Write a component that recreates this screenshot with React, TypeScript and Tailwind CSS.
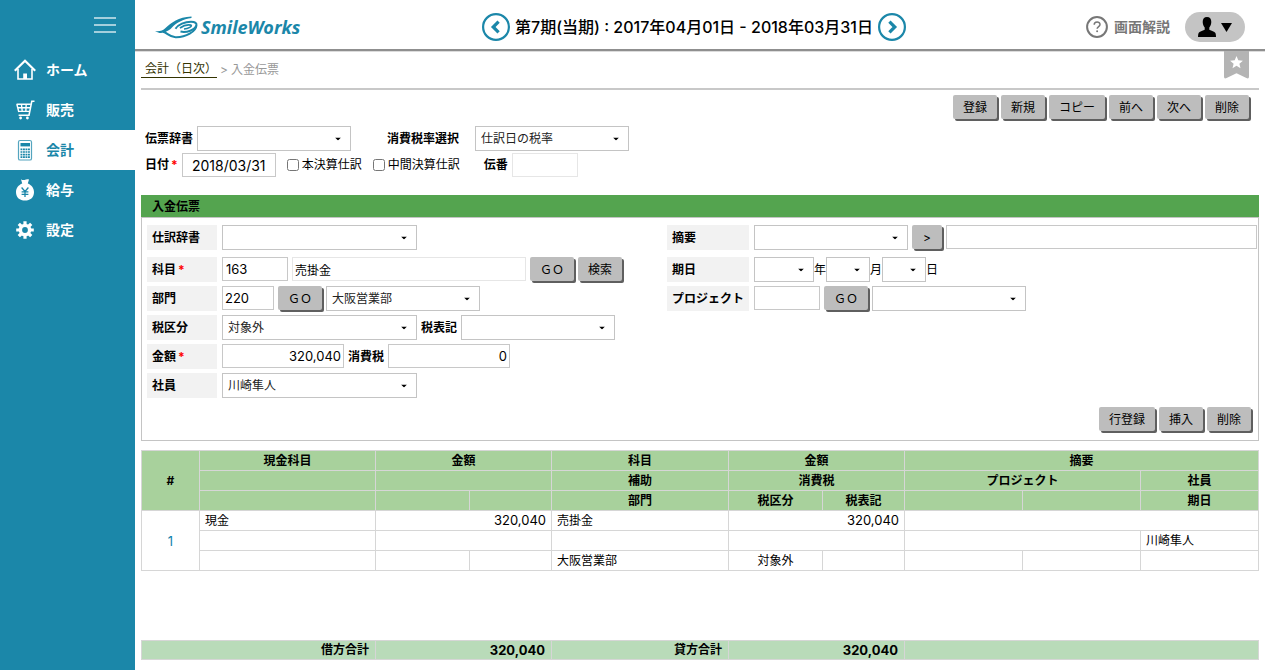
import type { ReactNode } from "react";

function Caret() {
  return (
    <svg className="pointer-events-none absolute right-[10px] top-1/2 h-[3px] w-[6px] -translate-y-1/2" viewBox="0 0 6 3" aria-hidden="true">
      <path d="M0 0h6L3 3z" fill="#000" />
    </svg>
  );
}

function Select({ id, width, value = "", label }: { id: string; width: string; value?: string; label?: string }) {
  return (
    <span className={`relative block shrink-0 ${width}`}>
      <select
        id={id}
        aria-label={label}
        defaultValue={value}
        className="block h-[25px] w-full appearance-none border border-[#c4c4c4] bg-white pl-[5px] pr-5 text-[12px] text-[#222]"
      >
        <option value={value}>{value}</option>
      </select>
      <Caret />
    </span>
  );
}

function Field({ id, className, value = "", label, readOnly = false }: { id: string; className: string; value?: string; label?: string; readOnly?: boolean }) {
  return (
    <input
      id={id}
      type="text"
      aria-label={label}
      defaultValue={value}
      readOnly={readOnly}
      className={`block h-6 border bg-white ${readOnly ? "border-[#e6e6e6]" : "border-[#c8c8c8]"} ${className}`}
    />
  );
}

function Button({ children, className = "px-[10px]", label }: { children: ReactNode; className?: string; label?: string }) {
  return (
    <button
      type="button"
      aria-label={label}
      className={`h-6 shrink-0 rounded-[2px] bg-[#bdbdbd] pt-[2px] text-[12px] leading-[22px] whitespace-nowrap text-black shadow-[2px_2px_0_#5f5f5f] ${className}`}
    >
      {children}
    </button>
  );
}

function Required() {
  return <span className="ml-[2px] text-[#f00]">*</span>;
}

function RowLabel({ htmlFor, children, wide = false, required = false }: { htmlFor: string; children: ReactNode; wide?: boolean; required?: boolean }) {
  return (
    <label
      htmlFor={htmlFor}
      className={`mr-[5px] block h-[25px] shrink-0 bg-[#f2f2f2] pl-[5px] font-bold leading-[26px] whitespace-nowrap ${wide ? "w-[82px]" : "w-[70px]"}`}
    >
      {children}
      {required && <Required />}
    </label>
  );
}

function HomeIcon() {
  return (
    <svg viewBox="0 0 24 24" className="h-6 w-6" fill="none" stroke="currentColor">
      <path d="M1.8 12.8 12 2.8l10.2 10" strokeWidth="2.2" />
      <path d="M5 11v10h14V11" strokeWidth="1.6" />
      <path d="M10.200 15.500h3.800V21h-3.800z" fill="currentColor" stroke="none" />
    </svg>
  );
}

function CartIcon() {
  return (
    <svg viewBox="0 0 24 24" className="h-6 w-6" fill="none" stroke="currentColor" strokeWidth="1.4">
      <path d="M21.5 3.2h-2.7L16 17.3H5.6" strokeWidth="1.6" />
      <path d="M3.6 6.2h14.2M4.6 9.8h12.6M5.6 13.4h10.8M3.8 6l2 8M8.4 6l.9 8M13.2 6l-.4 8" />
      <circle cx="7.6" cy="20" r="1.4" fill="currentColor" stroke="none" />
      <circle cx="14.4" cy="20" r="1.4" fill="currentColor" stroke="none" />
    </svg>
  );
}

function CalculatorIcon() {
  return (
    <svg viewBox="0 0 24 24" className="h-6 w-6" fill="none" stroke="currentColor">
      <rect x="5.500" y="2.500" width="13" height="19.500" rx="1.600" strokeWidth="1.200" opacity=".75" />
      <rect x="7.500" y="5" width="9.500" height="3.400" fill="currentColor" stroke="none" />
      <path d="M7.500 11.400H17M7.500 14H17M7.500 16.600H17M7.500 19.200H17" strokeWidth="1.700" strokeDasharray="1.900 .6" />
    </svg>
  );
}

function MoneyBagIcon() {
  return (
    <svg viewBox="0 0 24 24" className="h-6 w-6">
      <path d="M8 1.300c1.400.9 2.300 1 3.600.6C13 1.400 14.600 1 16 1.600L14.800 5.600C18.400 7 21 10.300 21 14.200 21 19.400 17.200 22.600 12 22.600S3 19.400 3 14.200C3 10.300 5.600 7 9.200 5.600z" fill="currentColor" />
      <path d="M8.600 9.500 12 13.500l3.400-4M12 13.500v5.500M8.600 13.800h6.800M8.600 16.300h6.800" fill="none" stroke="#1b87a9" strokeWidth="1.300" />
    </svg>
  );
}

function GearIcon() {
  return (
    <svg viewBox="0 0 24 24" className="h-6 w-6" fill="none" stroke="currentColor">
      <circle cx="12" cy="12" r="4.600" strokeWidth="3.400" />
      <path d="M12 3.200v3M12 17.800v3M3.200 12h3M17.800 12h3M5.800 5.800 8 8M16 16l2.200 2.200M5.800 18.200 8 16M16 8l2.200-2.200" strokeWidth="3.200" />
    </svg>
  );
}

const menu = [
  { name: "ホーム", icon: <HomeIcon /> },
  { name: "販売", icon: <CartIcon /> },
  { name: "会計", icon: <CalculatorIcon />, active: true },
  { name: "給与", icon: <MoneyBagIcon /> },
  { name: "設定", icon: <GearIcon /> },
];

function Sidebar() {
  return (
    <aside className="w-[135px] shrink-0 bg-[#1b87a9]">
      <div className="flex h-[50px] items-center justify-end pr-[19px]">
        <button type="button" aria-label="メニュー" className="flex flex-col gap-[5px] text-[#a4cfdd]">
          <span className="block h-[2px] w-[22px] bg-current" />
          <span className="block h-[2px] w-[22px] bg-current" />
          <span className="block h-[2px] w-[22px] bg-current" />
        </button>
      </div>
      <nav>
        {menu.map((m) => (
          <a
            key={m.name}
            href="#"
            className={`flex h-10 items-center gap-[9px] pl-[13px] text-[14px] font-bold ${m.active ? "bg-white text-[#1b87a9]" : "text-white"}`}
          >
            {m.icon}
            {m.name}
          </a>
        ))}
      </nav>
    </aside>
  );
}

function PeriodButton({ next = false }: { next?: boolean }) {
  return (
    <button type="button" aria-label={next ? "次の期" : "前の期"} className="text-[#1b87a9]">
      <svg viewBox="0 0 28 28" className="block h-7 w-7" fill="none" stroke="currentColor">
        <circle cx="14" cy="14" r="12.900" strokeWidth="2.200" />
        <path d={next ? "M11.400 8.600l5.400 5.400-5.400 5.400" : "M16.600 8.600 11.200 14l5.400 5.400"} strokeWidth="3.200" />
      </svg>
    </button>
  );
}

function Header() {
  return (
    <header className="flex h-[51px] items-center justify-between border-b-2 border-[#8f8f8f] px-5 pt-[5px] shadow-[0_1px_0_#dcdcdc]">
      <a href="#" className="flex w-[147px] items-center gap-[2px] text-[#1b87a9]">
        <svg viewBox="0 0 44 23" className="h-[23px] w-11 shrink-0" fill="none" stroke="currentColor" aria-hidden="true">
          <path d="M0 15.200c5 .5 7.800-.6 10.500-3.200C16.500 6.500 23 1.200 36.500.5v1.600C28 3.200 21.500 6.800 16.500 12.100 14 14.800 9 17.600 4.500 16.900z" fill="currentColor" stroke="none" />
          <path d="M8 15.800c4.500 1 6 5.200 12.500 5.400C31 21.500 41 15.500 41.400 9.500" strokeWidth="2" />
          <path d="M20.500 12.800C23 8.500 30 5.800 36 5.800c4.200 0 6.200 1.500 5.300 3.900C39.800 13.800 32 17 25.500 15.600" strokeWidth="2" />
          <path d="M25 12c3.500-2.600 8-3.500 11-2.900 1.600 1.200-2.500 3.600-7 3.900" strokeWidth="1.600" />
        </svg>
        <span className="font-['Noto_Sans'] text-[18px] font-bold italic leading-6">SmileWorks</span>
      </a>
      <div className="flex items-center gap-[5px]">
        <PeriodButton />
        <span className="text-[16px] font-medium whitespace-nowrap">第7期(当期) : 2017年04月01日 - 2018年03月31日</span>
        <PeriodButton next />
      </div>
      <div className="flex items-center gap-[15px]">
        <a href="#" className="flex items-center gap-[6px] text-[14px] font-bold text-[#777]">
          <svg viewBox="0 0 22 22" className="h-[22px] w-[22px]" fill="none" stroke="currentColor" aria-hidden="true">
            <circle cx="11" cy="11" r="9.900" strokeWidth="2" />
            <path d="M8.200 8.700c0-3.600 5.800-3.500 5.800-.3 0 2.100-2.900 2.200-2.900 4.400" strokeWidth="1.500" />
            <circle cx="11.100" cy="15.300" r="1" fill="currentColor" stroke="none" />
          </svg>
          画面解説
        </a>
        <button type="button" aria-label="ユーザー" className="flex h-[30px] w-[60px] items-center justify-center gap-[5px] rounded-full bg-[#c4c4c4] text-black">
          <svg viewBox="0 0 18 20" className="h-5 w-[18px]" fill="currentColor">
            <path d="M9 0c2.800 0 4.400 1.900 4.300 5-.1 2.600-1 4.300-2 5.400v2.400c2.200 1.300 5.200 1.500 6.100 3.300.4.900.6 2.300.6 3.900H0c0-1.600.2-3 .6-3.900.9-1.800 3.900-2 6.100-3.300v-2.400c-1-1.100-1.900-2.800-2-5.400C4.600 1.900 6.200 0 9 0z" />
          </svg>
          <svg viewBox="0 0 11 9" className="h-[9px] w-[11px]" fill="currentColor">
            <path d="M0 0h11L5.500 9z" />
          </svg>
        </button>
      </div>
    </header>
  );
}

function Breadcrumb() {
  return (
    <div className="flex h-[39px] items-start justify-between border-b-2 border-[#c8c8c8] pr-[10px]">
      <nav className="flex items-center gap-[3px] pt-[10px] text-[12px] leading-4 text-[#999]">
        <a href="#" className="border-b border-[#333300] pl-1 text-[#333300]">会計（日次）</a>
        <span>&gt;</span>
        <span>入金伝票</span>
      </nav>
      <button type="button" aria-label="お気に入り">
        <svg viewBox="0 0 25 28" className="block h-7 w-[25px]">
          <path d="M0 0h25v25.500q0 3-2.600 1.600L12.500 22.300 2.600 27.100Q0 28.500 0 25.500z" fill="#b4b4b4" />
          <path d="M12.500 5l1.800 4.300 4.600.4-3.500 3 1.100 4.500-4-2.400-4 2.400 1.100-4.500-3.500-3 4.600-.4z" fill="#fff" />
        </svg>
      </button>
    </div>
  );
}

function SlipForm() {
  return (
    <section className="mt-[18px]">
      <h1 className="h-[22px] bg-[#54a44f] pl-[11px] text-[12px] font-bold leading-6">入金伝票</h1>
      <div className="border border-[#c4c4c4] pb-[9px] pl-[5px] pr-[1px] pt-[7px]">
        <div className="grid grid-cols-[520fr_590fr]">
          <div className="flex flex-col gap-1">
            <div className="mb-[3px] flex items-start">
              <RowLabel htmlFor="dict">仕訳辞書</RowLabel>
              <Select id="dict" width="w-[195px]" />
            </div>
            <div className="flex items-start gap-1">
              <div className="flex items-start">
                <RowLabel htmlFor="account" required>科目</RowLabel>
                <Field id="account" className="w-[66px] px-[3px] text-[13px]" value="163" />
              </div>
              <Field id="accountName" label="科目名" className="w-[234px] px-[2px] text-[12px]" value="売掛金" readOnly />
              <Button>ＧＯ</Button>
              <Button>検索</Button>
            </div>
            <div className="flex items-start gap-1">
              <div className="flex items-start">
                <RowLabel htmlFor="dept">部門</RowLabel>
                <Field id="dept" className="w-[52px] px-[2px] text-[13px]" value="220" />
              </div>
              <Button>ＧＯ</Button>
              <Select id="deptName" label="部門名" width="w-[154px]" value="大阪営業部" />
            </div>
            <div className="flex items-start gap-1">
              <div className="flex items-start">
                <RowLabel htmlFor="taxType">税区分</RowLabel>
                <Select id="taxType" width="w-[195px]" value="対象外" />
              </div>
              <label htmlFor="taxNote" className="self-center font-bold">税表記</label>
              <Select id="taxNote" width="w-[154px]" />
            </div>
            <div className="flex items-start gap-1">
              <div className="flex items-start">
                <RowLabel htmlFor="amount" required>金額</RowLabel>
                <Field id="amount" className="w-[122px] px-[2px] text-right text-[13px]" value="320,040" />
              </div>
              <label htmlFor="tax" className="self-center font-bold">消費税</label>
              <Field id="tax" className="w-[122px] px-[2px] text-right text-[13px]" value="0" />
            </div>
            <div className="flex items-start">
              <RowLabel htmlFor="staff">社員</RowLabel>
              <Select id="staff" width="w-[195px]" value="川崎隼人" />
            </div>
          </div>
          <div className="flex flex-col gap-1">
            <div className="mb-[3px] flex items-start gap-1">
              <div className="flex items-start">
                <RowLabel htmlFor="summary" wide>摘要</RowLabel>
                <Select id="summary" width="w-[154px]" />
              </div>
              <Button className="w-[30px]" label="摘要へ反映">&gt;</Button>
              <Field id="summaryText" label="摘要内容" className="min-w-0 flex-1 px-[3px]" />
            </div>
            <div className="flex items-start">
              <RowLabel htmlFor="year" wide>期日</RowLabel>
              <Select id="year" width="w-[60px]" />
              <label htmlFor="year" className="self-center">年</label>
              <Select id="month" width="w-[44px]" />
              <label htmlFor="month" className="self-center">月</label>
              <Select id="day" width="w-[44px]" />
              <label htmlFor="day" className="self-center">日</label>
            </div>
            <div className="flex items-start gap-1">
              <div className="flex items-start">
                <RowLabel htmlFor="project" wide>プロジェクト</RowLabel>
                <Field id="project" className="w-[66px] px-[3px] text-[13px]" />
              </div>
              <Button>ＧＯ</Button>
              <Select id="projectName" label="プロジェクト名" width="w-[154px]" />
            </div>
          </div>
        </div>
        <div className="mt-[9px] flex justify-end gap-1 pr-[6px]">
          <Button>行登録</Button>
          <Button>挿入</Button>
          <Button>削除</Button>
        </div>
      </div>
    </section>
  );
}

function Columns() {
  return (
    <colgroup>
      <col className="w-[58px]" />
      <col className="w-[176px]" />
      <col className="w-[94px]" />
      <col className="w-[82px]" />
      <col className="w-[177px]" />
      <col className="w-[94px]" />
      <col className="w-[82px]" />
      <col className="w-[118px]" />
      <col className="w-[118px]" />
      <col className="w-[118px]" />
    </colgroup>
  );
}

const th = "h-5 border border-[#d6d6d6] bg-[#a8d19c] p-0 text-center font-bold leading-[19px]";
const td = "h-5 border border-[#d6d6d6] px-[5px] py-0 leading-[19px]";
const num = "h-5 border border-[#d6d6d6] pl-0 pr-[5px] py-0 text-right text-[13px] leading-[19px]";

function SlipTable() {
  return (
    <table className="mt-[9px] w-full table-fixed border-collapse">
      <Columns />
      <thead>
        <tr>
          <th rowSpan={3} className={th}>#</th>
          <th className={th}>現金科目</th>
          <th colSpan={2} className={th}>金額</th>
          <th className={th}>科目</th>
          <th colSpan={2} className={th}>金額</th>
          <th colSpan={3} className={th}>摘要</th>
        </tr>
        <tr>
          <th className={th} />
          <th colSpan={2} className={th} />
          <th className={th}>補助</th>
          <th colSpan={2} className={th}>消費税</th>
          <th colSpan={2} className={th}>プロジェクト</th>
          <th className={th}>社員</th>
        </tr>
        <tr>
          <th className={th} />
          <th className={th} />
          <th className={th} />
          <th className={th}>部門</th>
          <th className={th}>税区分</th>
          <th className={th}>税表記</th>
          <th className={th} />
          <th className={th} />
          <th className={th}>期日</th>
        </tr>
      </thead>
      <tbody>
        <tr>
          <td rowSpan={3} className="border border-[#d6d6d6] p-0 text-center text-[13px]">
            <a href="#" className="text-[#0f82ad]">1</a>
          </td>
          <td className={td}>現金</td>
          <td colSpan={2} className={num}>320,040</td>
          <td className={td}>売掛金</td>
          <td colSpan={2} className={num}>320,040</td>
          <td colSpan={3} className={td} />
        </tr>
        <tr>
          <td className={td} />
          <td colSpan={2} className={td} />
          <td className={td} />
          <td colSpan={2} className={td} />
          <td colSpan={2} className={td} />
          <td className={td}>川崎隼人</td>
        </tr>
        <tr>
          <td className={td} />
          <td className={td} />
          <td className={td} />
          <td className={td}>大阪営業部</td>
          <td className={`${td} text-center`}>対象外</td>
          <td className={td} />
          <td className={td} />
          <td className={td} />
          <td className={td} />
        </tr>
      </tbody>
    </table>
  );
}

const total = "h-[19px] border border-[#d6d6d6] pl-0 pr-[6px] py-0 text-right font-bold leading-[18px]";

function Totals() {
  return (
    <div className="mt-auto pb-[10px] pt-5">
      <table className="w-full table-fixed border-collapse bg-[#b9dbb9]">
        <Columns />
        <tbody>
          <tr>
            <th colSpan={2} className={total}>借方合計</th>
            <td colSpan={2} className={`${total} text-[13px]`}>320,040</td>
            <th className={total}>貸方合計</th>
            <td colSpan={2} className={`${total} text-[13px]`}>320,040</td>
            <td colSpan={3} className={total} />
          </tr>
        </tbody>
      </table>
    </div>
  );
}

export default function App() {
  return (
    <div className="flex min-h-screen bg-white font-[Inter,'Noto_Sans_CJK_JP',sans-serif] text-[12px] leading-4 text-black">
      <Sidebar />
      <div className="flex min-w-0 flex-1 flex-col">
        <Header />
        <main className="flex flex-1 flex-col pl-[6px] pr-[6px]">
          <Breadcrumb />
          <div className="mt-[5px] flex justify-end gap-1 pr-[10px]">
            <Button>登録</Button>
            <Button>新規</Button>
            <Button>コピー</Button>
            <Button>前へ</Button>
            <Button>次へ</Button>
            <Button>削除</Button>
          </div>
          <div className="mt-[7px] flex flex-col gap-[2px] pl-1">
            <div className="flex items-center">
              <label htmlFor="slipDict" className="mr-1 font-bold">伝票辞書</label>
              <Select id="slipDict" width="w-[154px]" />
              <label htmlFor="rate" className="ml-9 mr-4 font-bold">消費税率選択</label>
              <Select id="rate" width="w-[154px]" value="仕訳日の税率" />
            </div>
            <div className="flex items-center">
              <label htmlFor="date" className="mr-1 font-bold">日付<Required /></label>
              <Field id="date" className="w-[94px] text-center text-[14px]" value="2018/03/31" />
              <label className="ml-[11px] flex items-center gap-[3px]">
                <input type="checkbox" className="h-3 w-3" />
                本決算仕訳
              </label>
              <label className="ml-[11px] flex items-center gap-[3px]">
                <input type="checkbox" className="h-3 w-3" />
                中間決算仕訳
              </label>
              <label htmlFor="slipNo" className="ml-6 mr-1 font-bold">伝番</label>
              <Field id="slipNo" className="w-[66px] px-[3px] text-[13px]" readOnly />
            </div>
          </div>
          <SlipForm />
          <SlipTable />
          <Totals />
        </main>
      </div>
    </div>
  );
}
